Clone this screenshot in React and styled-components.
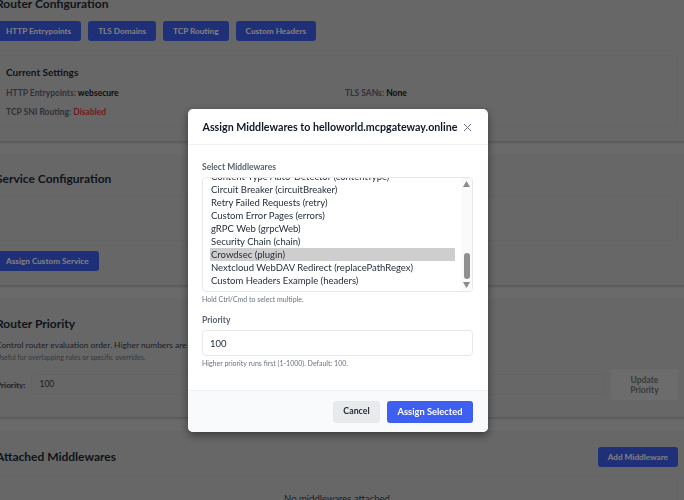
import React from "react";
import styled, { createGlobalStyle } from "styled-components";

const FONT = `Lato, "Noto Sans", "Liberation Sans", sans-serif`;

const Global = createGlobalStyle`
  html, body { margin: 0; padding: 0; height: 100%; overflow: hidden; background: #d4d4d4; }
  body { font-family: ${FONT}; color: #1f2937; }
  #root { height: 100%; }
`;

const Viewport = styled.div`
  position: relative;
  width: 684px;
  height: 500px;
  overflow: hidden;
  background: #d4d4d4;
`;

const Page = styled.div`
  margin: -20px 0 0 -24px;
  width: 712px;
  display: flex;
  flex-direction: column;
  gap: 15px;
`;

const Card = styled.section`
  background: #cecece;
  border-radius: 4px;
  box-shadow: 0 1px 3px rgba(0, 0, 0, 0.25);
  padding: ${(p) => p.$pad};
  height: ${(p) => p.$h}px;
  box-sizing: border-box;
  flex: none;
`;

const Title = styled.h2`
  margin: 0;
  font-size: 12px;
  line-height: 18px;
  font-weight: 700;
  color: #1f2937;
`;

const TitleRow = styled.div`
  display: flex;
  align-items: center;
  justify-content: space-between;
  margin-bottom: 9px;
`;

const BtnRow = styled.div`
  display: flex;
  gap: 7px;
  margin: ${(p) => p.$m};
`;

const PrimaryBtn = styled.button`
  height: 20px;
  padding: 0 10px;
  border: 0;
  border-radius: 3px;
  background: #3f5ff0;
  color: #fff;
  font: 700 8.2px/1 ${FONT};
  white-space: nowrap;
`;

const Panel = styled.div`
  height: ${(p) => p.$h}px;
  margin-top: ${(p) => p.$mt || 0}px;
  box-sizing: border-box;
  background: #cfcfcf;
  border: 1px solid #c8c8c8;
  border-radius: 3px;
  padding: 10px 9px;
`;

const PanelTitle = styled.h3`
  margin: 0 0 8px;
  font-size: 10px;
  line-height: 13px;
  font-weight: 700;
  color: #1f2937;
`;

const SettingGrid = styled.div`
  display: grid;
  grid-template-columns: 339px 1fr;
  row-gap: 7px;
`;

const Setting = styled.div`
  font-size: 8.5px;
  line-height: 12px;
  font-weight: 700;
  color: #5f6470;
`;

const Val = styled.span`
  color: ${(p) => p.$c || "#111827"};
`;

const Desc = styled.p`
  margin: 6px 0 0;
  font-size: 8.4px;
  line-height: 13px;
  color: #374151;
  white-space: nowrap;
`;

const Note = styled.p`
  margin: 0;
  font-size: 7px;
  line-height: 11px;
  color: #6b7280;
`;

const PriorityRow = styled.div`
  display: flex;
  align-items: center;
  gap: 6px;
  margin: 6px 0 0;
`;

const PriorityLabel = styled.span`
  font-size: 8.2px;
  font-weight: 700;
  color: #374151;
  margin-top: 1px;
`;

const BgInput = styled.div`
  flex: 1;
  height: 21px;
  box-sizing: border-box;
  border: 1px solid #c6c6c6;
  border-radius: 3px;
  padding: 0 7px;
  font-size: 8.5px;
  line-height: 19px;
  color: #374151;
`;

const DisabledBtn = styled.div`
  width: 67px;
  height: 31px;
  border-radius: 3px;
  background: #d8d8d8;
  color: #777;
  font-size: 8.5px;
  font-weight: 700;
  line-height: 10px;
  text-align: center;
  display: flex;
  align-items: center;
  justify-content: center;
`;

const Empty = styled.div`
  text-align: center;
  font-size: 9.5px;
  line-height: 13px;
  margin-top: 5px;
  color: #374151;
`;

const Overlay = styled.div`
  position: absolute;
  inset: 0;
  background: rgba(0, 0, 0, 0.5);
  backdrop-filter: blur(0.5px);
  display: flex;
  justify-content: center;
  padding-top: 109px;
  box-sizing: border-box;
`;

const Modal = styled.div`
  width: 300px;
  height: 323px;
  margin-left: -8px;
  background: #fff;
  border-radius: 5px;
  box-shadow: 0 3px 8px rgba(0, 0, 0, 0.45);
  display: flex;
  flex-direction: column;
  overflow: hidden;
`;

const ModalHead = styled.header`
  height: 36px;
  flex: none;
  padding: 0 16.5px 0 14.5px;
  display: flex;
  align-items: center;
  justify-content: space-between;
  border-bottom: 1px solid #f0f1f3;
  box-sizing: border-box;
`;

const ModalTitle = styled.h2`
  margin: 0;
  font-size: 10.7px;
  font-weight: 700;
  color: #111827;
  white-space: nowrap;
`;

const ModalBody = styled.div`
  flex: 1;
  padding: 16px 15px 0 14px;
  display: flex;
  flex-direction: column;
`;

const Label = styled.label`
  font-size: 8.5px;
  line-height: 12px;
  font-weight: 700;
  color: #5b6472;
  margin-bottom: ${(p) => p.$mb}px;
`;

const ListBox = styled.div`
  height: 115px;
  box-sizing: border-box;
  border: 1px solid #e5e7eb;
  border-radius: 4px;
  display: flex;
  overflow: hidden;
  margin-bottom: 2px;
`;

const Options = styled.div`
  flex: 1;
  padding: 0 6px 0 7px;
  margin-top: -8px;
`;

const Option = styled.div`
  height: 13px;
  line-height: 13px;
  font-size: 9.5px;
  padding-left: 1px;
  color: #1f2937;
  white-space: nowrap;
  background: ${(p) => (p.$sel ? "#cecece" : "transparent")};
`;

const Track = styled.div`
  width: 11px;
  flex: none;
  background: #fafafa;
  display: flex;
  flex-direction: column;
  align-items: center;
  padding: 3px 0;
  box-sizing: border-box;
`;

const Thumb = styled.div`
  width: 6px;
  height: 26px;
  margin-top: auto;
  margin-bottom: 3px;
  border-radius: 3px;
  background: #8f8f8f;
`;

const Hint = styled.div`
  font-size: 7px;
  line-height: 11px;
  color: #6b7280;
`;

const FieldGap = styled.div`
  height: 9px;
`;

const NumInput = styled.div`
  height: 26px;
  box-sizing: border-box;
  border: 1px solid #e5e7eb;
  border-radius: 4px;
  padding: 0 7px;
  font-size: 9.5px;
  line-height: 25px;
  color: #1f2937;
  margin: 0 0 2px;
`;

const ModalFoot = styled.footer`
  height: 42px;
  flex: none;
  background: #f9fafb;
  border-top: 1px solid #f0f1f3;
  display: flex;
  align-items: center;
  justify-content: flex-end;
  gap: 7px;
  padding: 0 15px;
  box-sizing: border-box;
`;

const CancelBtn = styled.button`
  height: 22px;
  width: 47px;
  padding: 0;
  border: 1px solid #e5e7eb;
  border-radius: 3px;
  background: #e9eaec;
  color: #1f2937;
  font: 700 8.8px/1 ${FONT};
`;

const AssignBtn = styled.button`
  height: 22px;
  width: 86px;
  padding: 0;
  border: 0;
  border-radius: 3px;
  background: #3f5ff0;
  color: #fff;
  font: 700 9.3px/1 ${FONT};
`;

const Close = styled.svg`
  width: 9px;
  height: 9px;
  flex: none;
  margin-top: 2px;
`;

const Arrow = ({ down }) => (
  <svg width="7" height="6" viewBox="0 0 7 6">
    <path d={down ? "M0 0h7L3.5 6z" : "M0 6h7L3.5 0z"} fill="#8a8a8a" />
  </svg>
);

const opts = [
  "Content-Type Auto-Detector (contentType)",
  "Circuit Breaker (circuitBreaker)",
  "Retry Failed Requests (retry)",
  "Custom Error Pages (errors)",
  "gRPC Web (grpcWeb)",
  "Security Chain (chain)",
  "Crowdsec (plugin)",
  "Nextcloud WebDAV Redirect (replacePathRegex)",
  "Custom Headers Example (headers)",
];

export default function App() {
  return (
    <Viewport>
      <Global />
      <Page>
        <Card $h={161} $pad="15px 10px 0 20px">
          <Title>Router Configuration</Title>
          <BtnRow $m="8px 0 14px">
            <PrimaryBtn>HTTP Entrypoints</PrimaryBtn>
            <PrimaryBtn>TLS Domains</PrimaryBtn>
            <PrimaryBtn>TCP Routing</PrimaryBtn>
            <PrimaryBtn>Custom Headers</PrimaryBtn>
          </BtnRow>
          <Panel $h={72}>
            <PanelTitle>Current Settings</PanelTitle>
            <SettingGrid>
              <Setting>HTTP Entrypoints: <Val>websecure</Val></Setting>
              <Setting>TLS SANs: <Val>None</Val></Setting>
              <Setting>TCP SNI Routing: <Val $c="#e03a3a">Disabled</Val></Setting>
            </SettingGrid>
          </Panel>
        </Card>
        <Card $h={129} $pad="14px 10px 0 20px">
          <Title>Service Configuration</Title>
          <Panel $h={46} $mt={7} />
          <BtnRow $m="10px 0 0"><PrimaryBtn>Assign Custom Service</PrimaryBtn></BtnRow>
        </Card>
        <Card $h={117} $pad="15px 10px 0 20px">
          <Title>Router Priority</Title>
          <Desc>Control router evaluation order. Higher numbers are</Desc>
          <Note>Useful for overlapping rules or specific overrides.</Note>
          <PriorityRow>
            <PriorityLabel>Priority:</PriorityLabel>
            <BgInput>100</BgInput>
            <DisabledBtn>Update<br />Priority</DisabledBtn>
          </PriorityRow>
        </Card>
        <Card $h={100} $pad="15px 10px 0 20px">
          <TitleRow>
            <Title>Attached Middlewares</Title>
            <PrimaryBtn>Add Middleware</PrimaryBtn>
          </TitleRow>
          <Panel $h={60}>
            <Empty>No middlewares attached</Empty>
          </Panel>
        </Card>
      </Page>
      <Overlay>
        <Modal>
          <ModalHead>
            <ModalTitle>Assign Middlewares to helloworld.mcpgateway.online</ModalTitle>
            <Close viewBox="0 0 9 9">
              <path d="M1 1l7 7M8 1L1 8" stroke="#6b7280" strokeWidth="1" fill="none" />
            </Close>
          </ModalHead>
          <ModalBody>
            <Label $mb={4}>Select Middlewares</Label>
            <ListBox>
              <Options>
                {opts.map((o, i) => (
                  <Option key={o} $sel={i === 6}>{o}</Option>
                ))}
              </Options>
              <Track>
                <Arrow />
                <Thumb />
                <Arrow down />
              </Track>
            </ListBox>
            <Hint>Hold Ctrl/Cmd to select multiple.</Hint>
            <FieldGap />
            <Label $mb={4}>Priority</Label>
            <NumInput>100</NumInput>
            <Hint>Higher priority runs first (1-1000). Default: 100.</Hint>
          </ModalBody>
          <ModalFoot>
            <CancelBtn>Cancel</CancelBtn>
            <AssignBtn>Assign Selected</AssignBtn>
          </ModalFoot>
        </Modal>
      </Overlay>
    </Viewport>
  );
}
